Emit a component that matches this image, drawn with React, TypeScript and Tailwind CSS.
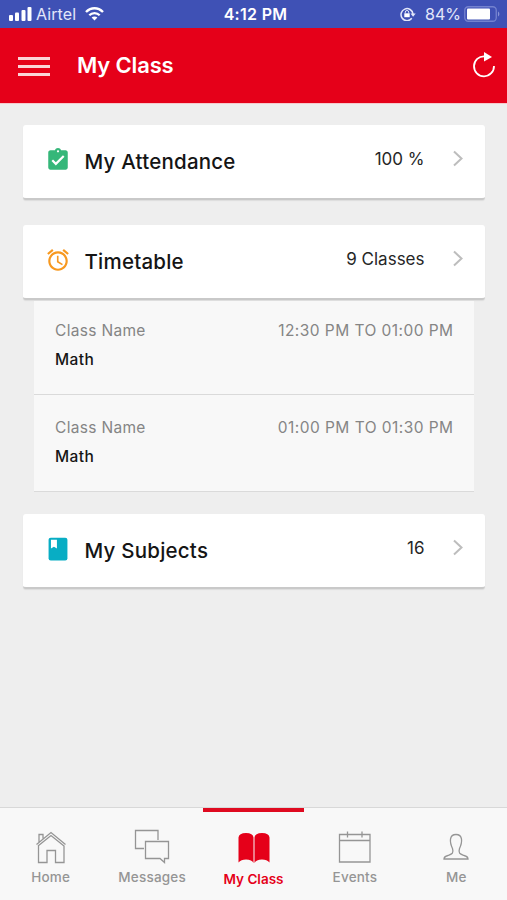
import type { ReactNode } from "react";

const classes = [
  { subject: "Math", time: "12:30 PM TO 01:00 PM" },
  { subject: "Math", time: "01:00 PM TO 01:30 PM" },
];

function StatusBar() {
  return (
    <div className="h-7 bg-[#3f51b5] flex items-center text-white text-[16px] leading-7">
      <div className="flex-1 flex items-center pl-[9px]">
        <svg width="23" height="14" viewBox="0 0 23 14" fill="currentColor">
          <rect x="0" y="8" width="4" height="6" rx="1" />
          <rect x="6" y="5.5" width="4" height="8.5" rx="1" />
          <rect x="12.500" y="3" width="4" height="11" rx="1" />
          <rect x="18.500" y="0" width="4" height="14" rx="1" />
        </svg>
        <span className="ml-[4px] text-[#e3e7fa] tracking-[0.1px]">Airtel</span>
        <svg className="ml-[9px]" width="19" height="14" viewBox="0 0 19 14" fill="none" stroke="currentColor">
          <path d="M1 5C6 0 13 0 18 5" strokeWidth="2.400" />
          <path d="M4.300 8.300C7.200 5.400 11.800 5.400 14.700 8.300" strokeWidth="2.300" />
          <path d="M9.500 13.500L6.600 10.600C8.200 9 10.800 9 12.400 10.600Z" fill="currentColor" stroke="none" />
        </svg>
      </div>
      <div className="ml-[2px] text-[16px] font-semibold tracking-[0.3px]">4:12 PM</div>
      <div className="flex-1 flex items-center justify-end pr-[7px]">
        <svg width="16" height="14" viewBox="0 0 16 14" fill="none" stroke="#e3e7fa">
          <path d="M11.800 11.300A6 6 0 1 1 13 7" strokeWidth="1.500" />
          <path d="M10.500 6.500h5.200l-2.600 3.200z" fill="#e3e7fa" stroke="none" />
          <rect x="4.300" y="6.300" width="5.400" height="3.900" fill="#fff" stroke="none" />
          <path d="M5.300 6.500V5.200a1.700 1.700 0 0 1 3.400 0v1.300" strokeWidth="1" />
        </svg>
        <span className="ml-[9px] text-[#e3e7fa]">84%</span>
        <svg className="ml-[3px]" width="36" height="16" viewBox="0 0 36 16">
          <rect x="0.750" y="0.750" width="31.500" height="14.500" rx="3.500" fill="none" stroke="#7482cf" strokeWidth="1.300" />
          <rect x="3" y="2.500" width="23" height="11" rx="1" fill="#fff" />
          <path d="M34 5.500c1.800.8 1.800 4.200 0 5z" fill="#8793d6" />
        </svg>
      </div>
    </div>
  );
}

function Header() {
  return (
    <header className="h-[75px] bg-[#e50019] flex items-center pl-[18px] pr-[11px]">
      <div className="flex flex-col gap-[5.500px] w-8 mt-0.5">
        <div className="h-[2.500px] bg-[#fbd3d7]" />
        <div className="h-[2.500px] bg-[#fbd3d7]" />
        <div className="h-[2.500px] bg-[#fbd3d7]" />
      </div>
      <h1 className="ml-[27px] text-white text-[22px] font-semibold tracking-[-0.15px]">My Class</h1>
      <svg className="ml-auto mb-[2px]" width="24" height="26" viewBox="0 0 24 26" fill="none">
        <path d="M12.500 4.300A10 10 0 1 0 22 14" stroke="#fff" strokeWidth="1.800" />
        <path d="M12 0L20 5L12 9.500z" fill="#fff" />
      </svg>
    </header>
  );
}

function Card({ icon, title, value }: { icon: ReactNode; title: string; value: string }) {
  return (
    <section className="h-[75px] bg-white rounded-[3px] border-b-2 border-[#c9c9c9] shadow-[0_1px_1px_#dcdcdc] flex items-center pl-[22px] pr-[22px]">
      <div className="w-[26px] mb-[3px]">{icon}</div>
      <h2 className="ml-[14px] mt-[1px] text-[20.500px] font-medium tracking-[0.22px] text-[#151515]">{title}</h2>
      <span className="ml-auto mb-[4px] text-[17px] text-[#262626]">{value}</span>
      <svg className="ml-[27px] mb-[6px]" width="11" height="17" viewBox="0 0 11 17" fill="none" stroke="#bdbdbd" strokeWidth="2">
        <path d="M2 1.500L9.500 8.500L2 15.500" />
      </svg>
    </section>
  );
}

function Tab({ label, active, children }: { label: string; active?: boolean; children: ReactNode }) {
  return (
    <div
      className={
        active
          ? "flex-1 flex flex-col items-center border-t-4 border-[#df0a20] text-[#e50019]"
          : "flex-1 flex flex-col items-center border-t-4 border-transparent text-[#959595]"
      }
    >
      <svg className="mt-[12px]" width="42" height="42" viewBox="0 0 42 42" fill="none" stroke="currentColor" strokeWidth="1.300">
        {children}
      </svg>
      <span className={active ? "mt-[5px] text-[13.500px] leading-4 font-semibold" : "mt-[3px] text-[13.500px] leading-4 font-medium tracking-[0.2px]"}>
        {label}
      </span>
    </div>
  );
}

export default function App() {
  return (
    <div className="w-full h-[900px] flex flex-col bg-[#eeeeee] font-['Inter',sans-serif]">
      <StatusBar />
      <Header />

      <main className="flex-1 border-t border-[#f6c9cc] pt-[21px] px-[22.500px]">
        <Card
          title="My Attendance"
          value="100 %"
          icon={
            <svg width="26" height="26" viewBox="0 0 24 24" fill="#35b779">
              <path d="M19 3h-4.180C14.400 1.840 13.300 1 12 1c-1.300 0-2.400.84-2.820 2H5c-1.100 0-2 .9-2 2v14c0 1.100.9 2 2 2h14c1.100 0 2-.9 2-2V5c0-1.100-.9-2-2-2zm-7 0c.55 0 1 .45 1 1s-.45 1-1 1-1-.45-1-1 .45-1 1-1zm-2 14l-4-4 1.410-1.410L10 14.170l6.590-6.590L18 9l-8 8z" />
            </svg>
          }
        />
        <div className="h-[25px]" />
        <Card
          title="Timetable"
          value="9 Classes"
          icon={
            <svg width="26" height="26" viewBox="0 0 24 24" fill="#f7981f">
              <path d="M22 5.720l-4.600-3.860-1.290 1.530 4.600 3.860L22 5.720zM7.880 3.390L6.600 1.860 2 5.710l1.290 1.530 4.590-3.850zM12.500 8H11v6l4.750 2.850.75-1.230-4-2.370V8zM12 4c-4.970 0-9 4.030-9 9s4.020 9 9 9c4.970 0 9-4.030 9-9s-4.030-9-9-9zm0 16c-3.870 0-7-3.130-7-7s3.130-7 7-7 7 3.130 7 7-3.130 7-7 7z" />
            </svg>
          }
        />
        <div className="mx-[11px] pt-px">
          {classes.map((item) => (
            <div key={item.time} className="h-[97px] first:h-[94px] bg-[#f8f8f8] border-b border-[#dadada] px-[21px] pt-[21px] first:pt-[18px]">
              <div className="flex justify-between text-[15.500px] leading-6 text-[#858585]">
                <span className="ml-[0.5px] tracking-[0.32px]">Class Name</span>
                <span className="mr-[-1px] tracking-[0.45px]">{item.time}</span>
              </div>
              <p className="ml-[0.5px] mt-[5px] text-[15.500px] leading-6 font-medium tracking-[0.45px] text-[#151515]">{item.subject}</p>
            </div>
          ))}
        </div>
        <div className="h-[22px]" />
        <Card
          title="My Subjects"
          value="16"
          icon={
            <svg width="26" height="26" viewBox="0 0 24 24">
              <rect x="3.300" y="1.500" width="17.400" height="21" rx="2" fill="#08adc4" />
              <path d="M5.500 3.500h5.500v8l-2.750-1.500-2.750 1.500z" fill="#fff" />
            </svg>
          }
        />
      </main>

      <nav className="h-[92px] bg-[#f8f8f8] shadow-[0_-1px_0_#d8d8d8] flex">
        <Tab label="Home">
          <path d="M6.500 20.500L21 8.500L35.500 20.500M8 22L21 11.500L34 22M8.500 21.500V38.500H17V26.500H25.500V38.500H34V21.500M9 18V10.500H13V14.500" />
        </Tab>
        <Tab label="Messages">
          <path d="M13 24.500H4.500V6.500H27V16M14.500 17.500H37.500V34.500H33.500V38.500L29 34.500H14.500Z" />
        </Tab>
        <Tab label="My Class" active>
          <path d="M5.500 13.500Q6 9 13 9Q20 9 20.500 13.500V39Q19 35.500 13 35.500Q8 35.500 5.500 38.500ZM21.500 13.500Q22 9 29 9Q36 9 36.500 13.500V38.500Q34 35.500 29 35.500Q23 35.500 21.500 39Z" fill="currentColor" stroke="none" />
        </Tab>
        <Tab label="Events">
          <path d="M5.500 10.500H36V38H5.500ZM5.500 16.500H36M13.500 7.500V13.500M28 7.500V13.500" />
        </Tab>
        <Tab label="Me">
          <path d="M21 10.500C14 10.500 14.500 18 17.500 24.500C19 29.500 17 30 13 31.500Q9 32.500 9 35H33Q33 32.500 29 31.500C25 30 23 29.500 24.500 24.500C27.500 18 28 10.500 21 10.500Z" />
        </Tab>
      </nav>
    </div>
  );
}
